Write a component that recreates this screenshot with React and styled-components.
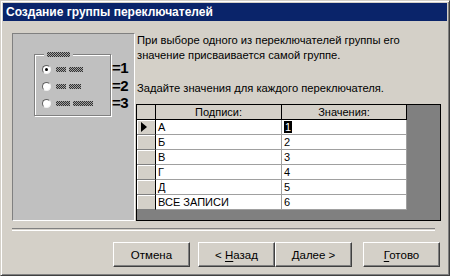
import React from "react";
import styled, { createGlobalStyle } from "styled-components";

const GlobalStyle = createGlobalStyle`
  html, body {
    margin: 0;
    padding: 0;
    background: #d4d0c8;
  }
  body {
    font-family: "Liberation Sans", Arial, sans-serif;
    font-size: 11px;
    color: #000;
  }
`;

const SWindow = styled.div`
  box-sizing: border-box;
  width: 450px;
  height: 276px;
  background: #d4d0c8;
  border-top: 1px solid #d4d0c8;
  border-left: 1px solid #d4d0c8;
  border-right: 1px solid #404040;
  border-bottom: 1px solid #404040;
  box-shadow: inset 1px 1px 0 #ffffff, inset -1px -1px 0 #808080;
  padding: 2px;
  display: flex;
  flex-direction: column;
`;

const STitleBar = styled.div`
  height: 18px;
  background: #0a246a;
  color: #fff;
  font-weight: bold;
  font-size: 12px;
  line-height: 18px;
  padding-left: 3px;
  white-space: nowrap;
`;

const SBody = styled.div`
  flex: 1;
  display: flex;
  flex-direction: column;
  padding: 12px 6px 0 9px;
`;

const SMain = styled.div`
  display: flex;
  gap: 1px;
  height: 188px;
`;

const SPicture = styled.div`
  box-sizing: border-box;
  width: 123px;
  height: 188px;
  background: #c0c0c0;
  border-top: 1px solid #808080;
  border-left: 1px solid #808080;
  border-right: 1px solid #ffffff;
  border-bottom: 1px solid #ffffff;
  display: flex;
  align-items: flex-start;
  padding: 20px 0 0 21px;
`;

const SGroupBox = styled.div`
  position: relative;
  box-sizing: border-box;
  width: 77px;
  height: 62px;
  border: 1px solid #808080;
  box-shadow: 1px 1px 0 #ffffff, inset 1px 1px 0 #ffffff;
  padding: 6px 0 0 7px;
`;

const SGroupLabel = styled.div`
  position: absolute;
  top: -3px;
  left: 9px;
  padding: 0 3px;
  background: #c0c0c0;
  display: flex;
`;

const SDots = styled.span`
  display: inline-block;
  width: ${(p) => p.$w}px;
  height: 5px;
  background: repeating-conic-gradient(#000 0 25%, #9a9a9a 0 50%) 0 0 / 2px 2px;
  opacity: 0.75;
`;

const SRadioRow = styled.div`
  height: 17px;
  display: flex;
  align-items: center;
  gap: 5px;
`;

const SRadio = styled.span`
  box-sizing: border-box;
  width: 9px;
  height: 9px;
  border-radius: 50%;
  background: #ffffff;
  border: 1px solid;
  border-color: #606060 #f0f0f0 #f0f0f0 #606060;
  display: flex;
  align-items: center;
  justify-content: center;
  &::after {
    content: "";
    width: 3px;
    height: 3px;
    border-radius: 50%;
    background: ${(p) => (p.$checked ? "#000" : "transparent")};
  }
`;

const SLabelWords = styled.span`
  display: flex;
  gap: 3px;
`;

const SEqCol = styled.div`
  display: flex;
  flex-direction: column;
  padding-top: 5px;
  margin-left: 1px;
`;

const SEq = styled.div`
  height: 17.5px;
  line-height: 17.5px;
  font-size: 15px;
  font-weight: bold;
  letter-spacing: -0.5px;
`;

const SRight = styled.div`
  width: 305px;
  display: flex;
  flex-direction: column;
`;

const SText = styled.p`
  margin: 0;
  padding-left: 1px;
  line-height: 14.5px;
  font-size: 11.2px;
  height: ${(p) => p.$h}px;
`;

const SGrid = styled.div`
  box-sizing: border-box;
  margin-top: auto;
  height: 117px;
  background: #808080;
  border: 1px solid #000;
`;

const SRow = styled.div`
  display: grid;
  grid-template-columns: 19px 126px 125px;
  height: 15px;
`;

const SHeadCell = styled.div`
  box-sizing: border-box;
  background: #d4d0c8;
  border-right: 1px solid #000;
  border-bottom: 1px solid #000;
  text-align: center;
  line-height: 14px;
  white-space: nowrap;
`;

const SSelector = styled.div`
  box-sizing: border-box;
  background: #d4d0c8;
  border-right: 1px solid #000;
  border-bottom: 1px solid #808080;
  box-shadow: inset 1px 1px 0 #ffffff;
  display: flex;
  align-items: center;
  padding-left: 4px;
`;

const SCell = styled.div`
  box-sizing: border-box;
  background: #ffffff;
  border-right: 1px solid #a0a0a0;
  border-bottom: 1px solid #a0a0a0;
  line-height: 14px;
  padding-left: 2px;
  white-space: nowrap;
`;

const SSelected = styled.span`
  background: #000;
  color: #fff;
  padding: 0 1px;
`;

const SSeparator = styled.div`
  margin: 7px 6px 0 0;
  height: 1px;
  border-top: 1px solid #808080;
  border-bottom: 1px solid #ffffff;
`;

const SButtons = styled.div`
  display: flex;
  margin-top: 11px;
  padding-left: 101px;
`;

const SButton = styled.button`
  box-sizing: border-box;
  width: 77px;
  height: 25px;
  margin-left: ${(p) => p.$gap || 0}px;
  background: #d4d0c8;
  font-family: "Liberation Sans", Arial, sans-serif;
  font-size: 11.5px;
  color: #000;
  padding: 0;
  border: 1px solid;
  border-color: #ffffff #404040 #404040 #ffffff;
  box-shadow: inset -1px -1px 0 #808080;
  u {
    text-decoration: underline;
    text-underline-offset: 2px;
  }
`;

const Arrow = () => (
  <svg width="6" height="10" viewBox="0 0 6 10">
    <path d="M0 0 L6 5 L0 10 Z" fill="#000" />
  </svg>
);

const radios = [
  { words: [10, 14], checked: true },
  { words: [10, 12] },
  { words: [14, 20] },
];

const rows = [
  { label: "А", value: "1", selected: true },
  { label: "Б", value: "2" },
  { label: "В", value: "3" },
  { label: "Г", value: "4" },
  { label: "Д", value: "5" },
  { label: "ВСЕ ЗАПИСИ", value: "6" },
];

const App = () => {
  return (
    <>
      <GlobalStyle />
      <SWindow>
        <STitleBar>Создание группы переключателей</STitleBar>
        <SBody>
          <SMain>
            <SPicture>
              <SGroupBox>
                <SGroupLabel>
                  <SDots $w={23} />
                </SGroupLabel>
                {radios.map((r, i) => (
                  <SRadioRow key={i}>
                    <SRadio $checked={r.checked} />
                    <SLabelWords>
                      {r.words.map((w, j) => (
                        <SDots key={j} $w={w} />
                      ))}
                    </SLabelWords>
                  </SRadioRow>
                ))}
              </SGroupBox>
              <SEqCol>
                <SEq>=1</SEq>
                <SEq>=2</SEq>
                <SEq>=3</SEq>
              </SEqCol>
            </SPicture>
            <SRight>
              <SText $h={48}>
                При выборе одного из переключателей группы его значение
                присваивается самой группе.
              </SText>
              <SText $h={20}>Задайте значения для каждого переключателя.</SText>
              <SGrid>
                <SRow>
                  <SHeadCell />
                  <SHeadCell>Подписи:</SHeadCell>
                  <SHeadCell>Значения:</SHeadCell>
                </SRow>
                {rows.map((r) => (
                  <SRow key={r.label}>
                    <SSelector>{r.selected && <Arrow />}</SSelector>
                    <SCell>{r.label}</SCell>
                    <SCell>
                      {r.selected ? <SSelected>{r.value}</SSelected> : r.value}
                    </SCell>
                  </SRow>
                ))}
              </SGrid>
            </SRight>
          </SMain>
          <SSeparator />
          <SButtons>
            <SButton>Отмена</SButton>
            <SButton $gap={8}>
              &lt; <u>Н</u>азад
            </SButton>
            <SButton>
              <u>Д</u>алее &gt;
            </SButton>
            <SButton $gap={11}>
              <u>Г</u>отово
            </SButton>
          </SButtons>
        </SBody>
      </SWindow>
    </>
  );
};

export default App;
